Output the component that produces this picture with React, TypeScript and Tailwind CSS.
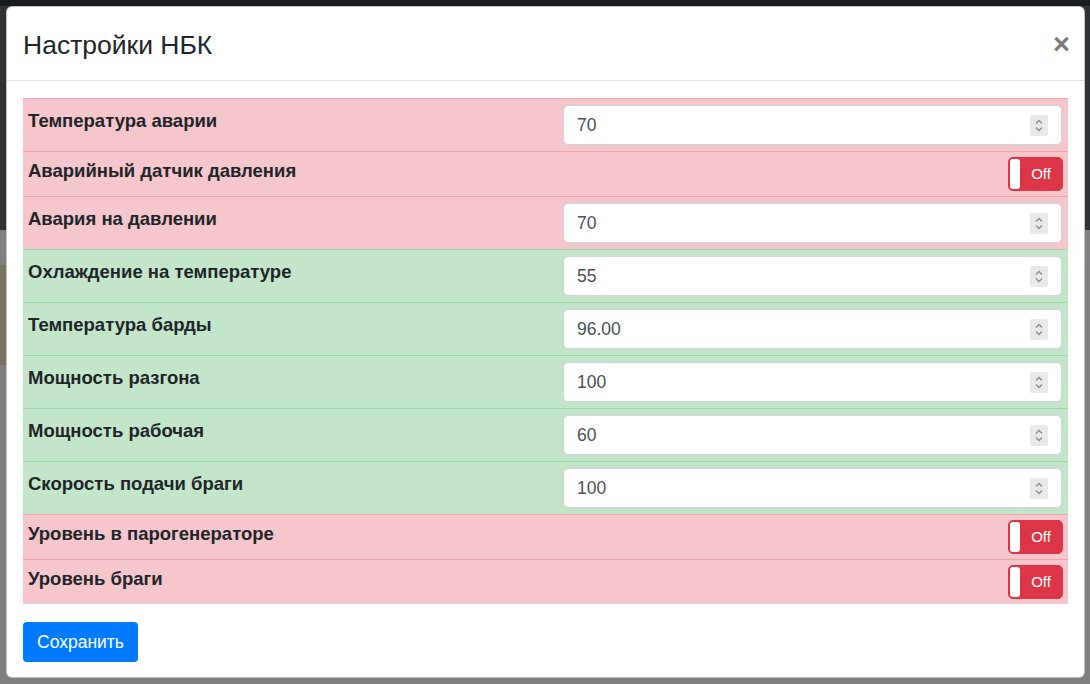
import React from 'react'

type Row =
  | { label: string; tone: 'danger' | 'success'; kind: 'number'; value: string }
  | { label: string; tone: 'danger' | 'success'; kind: 'toggle'; on: boolean }

const rows: Row[] = [
  { label: 'Температура аварии', tone: 'danger', kind: 'number', value: '70' },
  { label: 'Аварийный датчик давления', tone: 'danger', kind: 'toggle', on: false },
  { label: 'Авария на давлении', tone: 'danger', kind: 'number', value: '70' },
  { label: 'Охлаждение на температуре', tone: 'success', kind: 'number', value: '55' },
  { label: 'Температура барды', tone: 'success', kind: 'number', value: '96.00' },
  { label: 'Мощность разгона', tone: 'success', kind: 'number', value: '100' },
  { label: 'Мощность рабочая', tone: 'success', kind: 'number', value: '60' },
  { label: 'Скорость подачи браги', tone: 'success', kind: 'number', value: '100' },
  { label: 'Уровень в парогенераторе', tone: 'danger', kind: 'toggle', on: false },
  { label: 'Уровень браги', tone: 'danger', kind: 'toggle', on: false },
]

function Spinner() {
  return (
    <span className="flex h-[21px] w-[18px] items-center justify-center rounded-[2px] bg-[#e9e9ed]">
      <svg width="10" height="15" viewBox="0 0 10 15" fill="none" stroke="#8a8a8f" strokeWidth="1.3">
        <path d="M2 5.5 L5 2.5 L8 5.5" />
        <path d="M2 9.5 L5 12.5 L8 9.5" />
      </svg>
    </span>
  )
}

function NumberField({ value }: { value: string }) {
  return (
    <div className="flex h-[40px] w-full items-center rounded-[5px] border border-[#ced4da] bg-white pl-[13px] pr-[13px]">
      <span className="flex-1 text-[17.5px] text-[#495057]">{value}</span>
      <Spinner />
    </div>
  )
}

function Toggle({ on }: { on: boolean }) {
  return (
    <div className="flex h-[34px] w-[55px] overflow-hidden rounded-[5px] border border-[#dc3545] bg-[#dc3545]">
      <span className="my-[1px] ml-[1px] w-[10px] rounded-[3px] bg-white" />
      <span className="flex flex-1 items-center justify-center text-[15px] text-white">
        {on ? 'On' : 'Off'}
      </span>
    </div>
  )
}

export default function App() {
  return (
    <div className="relative h-[684px] w-[1090px] overflow-hidden font-['Liberation_Sans',Arial,sans-serif]">
      {/* затемнённая страница под модальным окном */}
      <div className="flex h-full flex-col bg-[#7f7f7f]">
        <div className="h-[6px] bg-[#181c1f]" />
        <div className="h-[224px] bg-[#303336]" />
        <div className="h-[35px] bg-[#7f8081]" />
        <div className="h-[100px] w-[600px] bg-[#7a7360]" />
      </div>

      {/* модальное окно */}
      <div className="absolute left-[6px] top-[6px] flex h-[672px] w-[1079px] flex-col rounded-[6px] border border-[#5a5a5a]/40 bg-white text-[#212529]">
        <div className="relative h-[74px] border-b border-[#dee2e6] pl-[16px] pt-[19px]">
          <h5 className="text-[26.5px] leading-[38px]">Настройки НБК</h5>
          <button className="absolute right-[14px] top-[19px] text-[29px] font-bold leading-[36px] text-[#7a7a7a]">
            ×
          </button>
        </div>

        <div className="px-[16px] pt-[17px]">
          <div className="flex flex-col">
            {rows.map((row) => {
              const tone =
                row.tone === 'danger'
                  ? 'bg-[#f5c6cb] border-[#f0a3ab]'
                  : 'bg-[#c3e6cb] border-[#9cd6a9]'
              return (
                <div key={row.label} className={`grid grid-cols-[534px_1fr] border-t ${tone}`}>
                  <div
                    className={`pl-[5px] text-[18.5px] font-bold leading-[26px] ${
                      row.kind === 'number' ? 'pt-[9px]' : 'pt-[6px]'
                    }`}
                  >
                    {row.label}
                  </div>
                  {row.kind === 'number' ? (
                    <div className="py-[6px] pl-[6px] pr-[6px]">
                      <NumberField value={row.value} />
                    </div>
                  ) : (
                    <div className="flex justify-end py-[5px] pr-[5px]">
                      <Toggle on={row.on} />
                    </div>
                  )}
                </div>
              )
            })}
          </div>

          <button className="mt-[18px] h-[40px] rounded-[4px] bg-[#007bff] px-[14px] text-[17.5px] text-white">
            Сохранить
          </button>
        </div>
      </div>
    </div>
  )
}
